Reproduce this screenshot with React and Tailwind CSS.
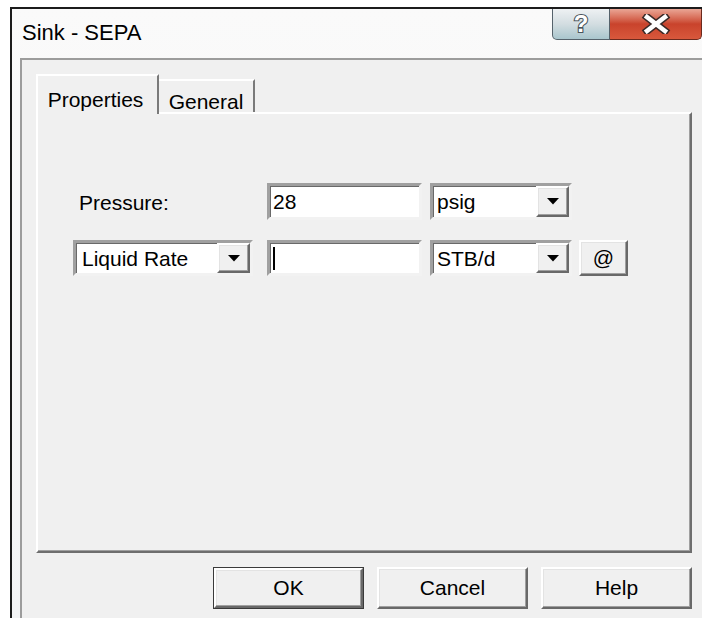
import React from "react";

// Classic Win32 bevels
const sunken =
  "border-[3px] border-t-[#a0a0a0] border-l-[#a0a0a0] border-b-[#f2f2f2] border-r-[#f2f2f2] shadow-[inset_1px_1px_0_#696969] bg-white";
const raised =
  "border-2 border-t-white border-l-white border-r-[#696969] border-b-[#696969] shadow-[inset_-1px_-1px_0_#a0a0a0,inset_1px_1px_0_#e3e3e3] bg-[#f0f0f0]";

function Arrow() {
  return (
    <div className={`${raised} w-[33px] h-full flex items-center justify-center`}>
      <svg width="12" height="7" viewBox="0 0 12 7">
        <polygon points="0,0 12,0 6,6.5" fill="#000" />
      </svg>
    </div>
  );
}

function Combo({ value, pad = "pl-[4px]", className = "" }) {
  return (
    <div className={`${sunken} h-full flex items-stretch ${className}`}>
      <div className={`flex-1 flex items-center ${pad} leading-none`}>{value}</div>
      <Arrow />
    </div>
  );
}

function Field({ children }) {
  return (
    <div className={`${sunken} h-full w-[155px] flex items-center pl-[3px] leading-none`}>
      {children}
    </div>
  );
}

function CaptionButtons() {
  return (
    <div className="flex self-start">
      <div className="w-[58px] h-[31px] rounded-bl-[5px] border border-t-0 border-[#55626b] bg-gradient-to-b from-[#eef1f3] via-[#d3dde1] to-[#a9c6cd] flex items-center justify-center">
        <svg width="24" height="26" viewBox="0 0 24 26">
          <text
            x="12"
            y="21"
            textAnchor="middle"
            fontFamily="Liberation Sans, Arial, sans-serif"
            fontWeight="bold"
            fontSize="24"
            fill="#fff"
            stroke="#4a545b"
            strokeWidth="2.2"
            paintOrder="stroke"
          >
            ?
          </text>
        </svg>
      </div>
      <div className="w-[92px] h-[31px] rounded-br-[5px] border border-t-0 border-l-0 border-[#6b2a1e] bg-gradient-to-b from-[#e9a595] via-[#c9432c] to-[#d8583c] flex items-center justify-center">
        <svg width="32" height="20" viewBox="0 0 32 20">
          <path d="M7 3 L25 17 M25 3 L7 17" stroke="#3b2a28" strokeWidth="7.5" strokeLinecap="square" fill="none" />
          <path d="M7 3 L25 17 M25 3 L7 17" stroke="#fff" strokeWidth="4.5" strokeLinecap="square" fill="none" />
        </svg>
      </div>
    </div>
  );
}

function DialogButton({ label, isDefault }) {
  if (isDefault) {
    return (
      <div className="w-[151px] h-[42px] border border-[#3a3a3a]">
        <div className={`${raised} w-full h-full flex items-center justify-center`}>{label}</div>
      </div>
    );
  }
  return (
    <div className={`${raised} w-[151px] h-[42px] flex items-center justify-center`}>{label}</div>
  );
}

export default function App() {
  return (
    <div className="w-[702px] h-[618px] overflow-hidden bg-white pt-[7px] pl-[10px] font-['Liberation_Sans',Arial,sans-serif] text-[21px] text-black">
      <div className="h-full border-l-2 border-t-2 border-[#1c1c1c] flex flex-col bg-gradient-to-b from-[#fafafa] to-[#f3f4f5]">
        {/* Title bar */}
        <div className="h-[49px] flex justify-between pl-[10px]">
          <div className="self-center text-[22px] leading-none -mt-[1px]">Sink - SEPA</div>
          <CaptionButtons />
        </div>

        {/* Client area */}
        <div className="flex-1 ml-[8px] border-l-2 border-t-2 border-[#9c9c9c] bg-[#f0f0f0] pl-[14px] pt-[14px]">
          {/* Tab headers */}
          <div className="flex items-end h-[38px]">
            <div className="relative z-10 w-[123px] h-[40px] -mb-[2px] bg-[#f0f0f0] border-t-2 border-l-2 border-r-2 border-t-white border-l-white border-r-[#7a7a7a] flex items-start justify-center pt-[8px] pr-[4px]">
              Properties
            </div>
            <div className="w-[96px] h-[33px] border-t-2 border-r-2 border-t-white border-r-[#7a7a7a] flex items-start justify-center pt-[5px]">
              General
            </div>
          </div>

          {/* Tab page */}
          <div className="w-[656px] h-[441px] border-2 border-t-white border-l-white border-r-[#6e6e6e] border-b-[#6e6e6e] shadow-[inset_-1px_-1px_0_#a0a0a0] pt-[69px] pl-[35px]">
            <div className="grid grid-cols-[186px_155px_142px_48px] grid-rows-[37px_36px] gap-x-2 gap-y-[20px]">
              <div className="flex items-center pl-[6px] pt-[2px]">Pressure:</div>
              <Field>28</Field>
              <Combo value="psig" />
              <div />

              <Combo value="Liquid Rate" pad="pl-[6px]" className="w-[180px]" />
              <Field>
                <div className="w-[2px] h-[23px] bg-black" />
              </Field>
              <Combo value="STB/d" />
              <div className={`${raised} h-full flex items-center justify-center -ml-px`}>@</div>
            </div>
          </div>

          {/* Dialog buttons */}
          <div className="w-[656px] flex justify-end gap-[13px] mt-[14px]">
            <DialogButton label="OK" isDefault />
            <DialogButton label="Cancel" />
            <DialogButton label="Help" />
          </div>
        </div>
      </div>
    </div>
  );
}
